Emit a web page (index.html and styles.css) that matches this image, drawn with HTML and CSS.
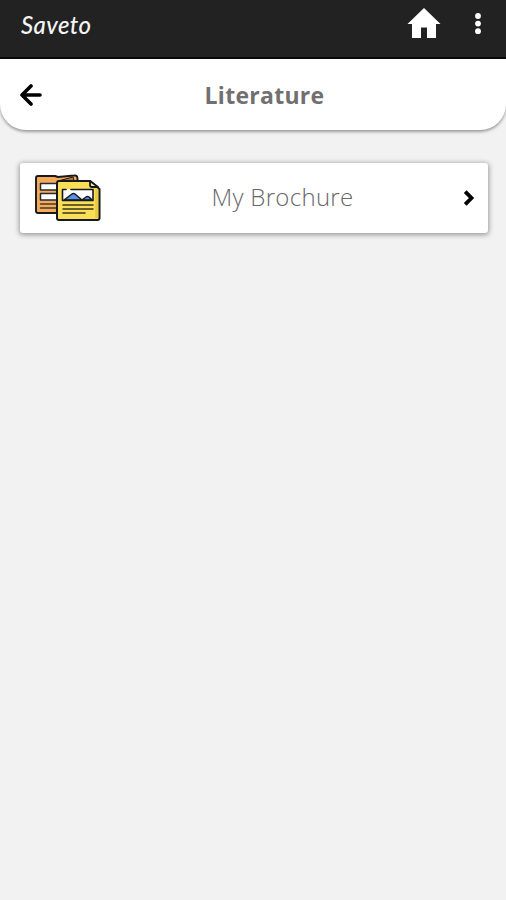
FILE: index.html
```html
<!DOCTYPE html>
<html lang="en">
<head>
<meta charset="utf-8">
<meta name="viewport" content="width=device-width, initial-scale=1">
<title>Literature</title>
<link rel="stylesheet" href="styles.css">
</head>
<body>
<header class="topbar">
  <span class="brand">Saveto</span>
  <svg class="home" viewBox="0 0 36 32" fill="#fff"><path d="M18 1 1.500 17H6v14h9V20.500h6V31h9V17h4.500Z"/></svg>
  <svg class="more" viewBox="0 0 8 24" fill="#fff"><circle cx="4" cy="4" r="2.900"/><circle cx="4" cy="11.600" r="2.900"/><circle cx="4" cy="19.200" r="2.900"/></svg>
</header>
<div class="titlebar">
  <svg class="back" viewBox="0 0 24 22" fill="none" stroke="#000" stroke-width="3.600" stroke-linecap="round" stroke-linejoin="round"><path d="M12 2 3 11l9 9M3 11h18"/></svg>
  <h1 class="title">Literature</h1>
</div>
<main class="list">
  <a class="card">
    <svg class="thumb" viewBox="0 0 67 48" stroke-linecap="round" stroke-linejoin="round">
      <path d="M3 2h17l3 1L39 1.500q3.500-.5 3.500 3V39H3q-2 0-2-2V4q0-2 2-2Z" fill="#f3aa59" stroke="#15191e" stroke-width="1.900"/>
      <path d="M25 6.500l13-3.500 1 3.500Z" fill="#b87535" stroke="#15191e" stroke-width="1"/>
      <path d="M5.500 9.500H24V16H5.500ZM5.500 19.500H24V26H5.500Z" fill="#fff" stroke="#252b32" stroke-width="1.500"/>
      <path d="M5.500 30H22M5.500 34H22" stroke="#49392a" stroke-width="1.500"/>
      <path d="M24 7h31l9.500 8v29q0 2-2 2H24q-2 0-2-2V9q0-2 2-2Z" fill="#f8df57" stroke="#15191e" stroke-width="2"/>
      <path d="M61.500 16v27" stroke="#e8c743" stroke-width="2.500"/>
      <path d="M55 7v4q0 2 2 2h6Z" fill="#faf0ac" stroke="#15191e" stroke-width="1.800"/>
      <path d="M27.500 15.500H58v11H27.500Z" fill="#fff"/>
      <path d="M29 26l8-6q1.500-1 3 0l7 6Zm18 0 4-3q1.500-1 3 0l3 3Z" fill="#5791e8" stroke="#15191e" stroke-width="1.500"/>
      <path d="M31 15.500h-3.500v11H58v-11H36" fill="none" stroke="#15191e" stroke-width="1.600"/>
      <path d="M28 31h30M28 35h30M28 39h22" stroke="#3b3520" stroke-width="1.600"/>
    </svg>
    <span class="label">My Brochure</span>
    <svg class="chevron" viewBox="0 0 12 18" fill="none" stroke="#000" stroke-width="3.800"><path d="M2.200 2.700 8.500 9l-6.300 6.300"/></svg>
  </a>
</main>
</body>
</html>
```
FILE: styles.css
```css
* { box-sizing: border-box; }
body {
  margin: 0;
  min-height: 100vh;
  background: #f2f2f2;
  font-family: "Open Sans", "Noto Sans", sans-serif;
}
svg { display: block; flex: none; }
.topbar {
  display: flex;
  align-items: flex-start;
  height: 59px;
  padding: 0 24px 0 21px;
  background: #222;
  border-bottom: 2px solid #090909;
}
.brand {
  margin-top: 10px;
  color: #f4f4f4;
  font: italic 500 24px/30px Lato, sans-serif;
  letter-spacing: 0.4px;
}
.home { width: 36px; height: 32px; margin: 7px 0 0 auto; }
.more { width: 8px; height: 24px; margin: 12px 0 0 32px; }
.titlebar {
  display: grid;
  grid-template-columns: 24px 1fr 24px;
  align-items: center;
  height: 71px;
  padding: 0 0 0 19px;
  background: #fff;
  border-radius: 0 0 26px 26px;
  box-shadow: 0 2px 3px rgba(0, 0, 0, 0.35);
}
.back { width: 24px; height: 22px; }
.title {
  margin: 0;
  padding-left: 4px;
  color: #707070;
  font-size: 23px;
  font-weight: 700;
  line-height: 30px;
  letter-spacing: 0.28px;
  text-align: center;
}
.list { padding: 33px 18px 0 20px; }
.card {
  display: flex;
  align-items: center;
  height: 70px;
  padding: 0 13px 0 15px;
  background: #fff;
  border-radius: 3px;
  box-shadow: 0 1px 5px 1px rgba(0, 0, 0, 0.36);
}
.thumb { width: 67px; height: 48px; }
.label {
  flex: 1;
  margin-top: -2px;
  color: #686868;
  font-size: 24px;
  font-weight: 300;
  line-height: 32px;
  letter-spacing: 0.3px;
  text-align: center;
}
.chevron { width: 12px; height: 18px; }
```
